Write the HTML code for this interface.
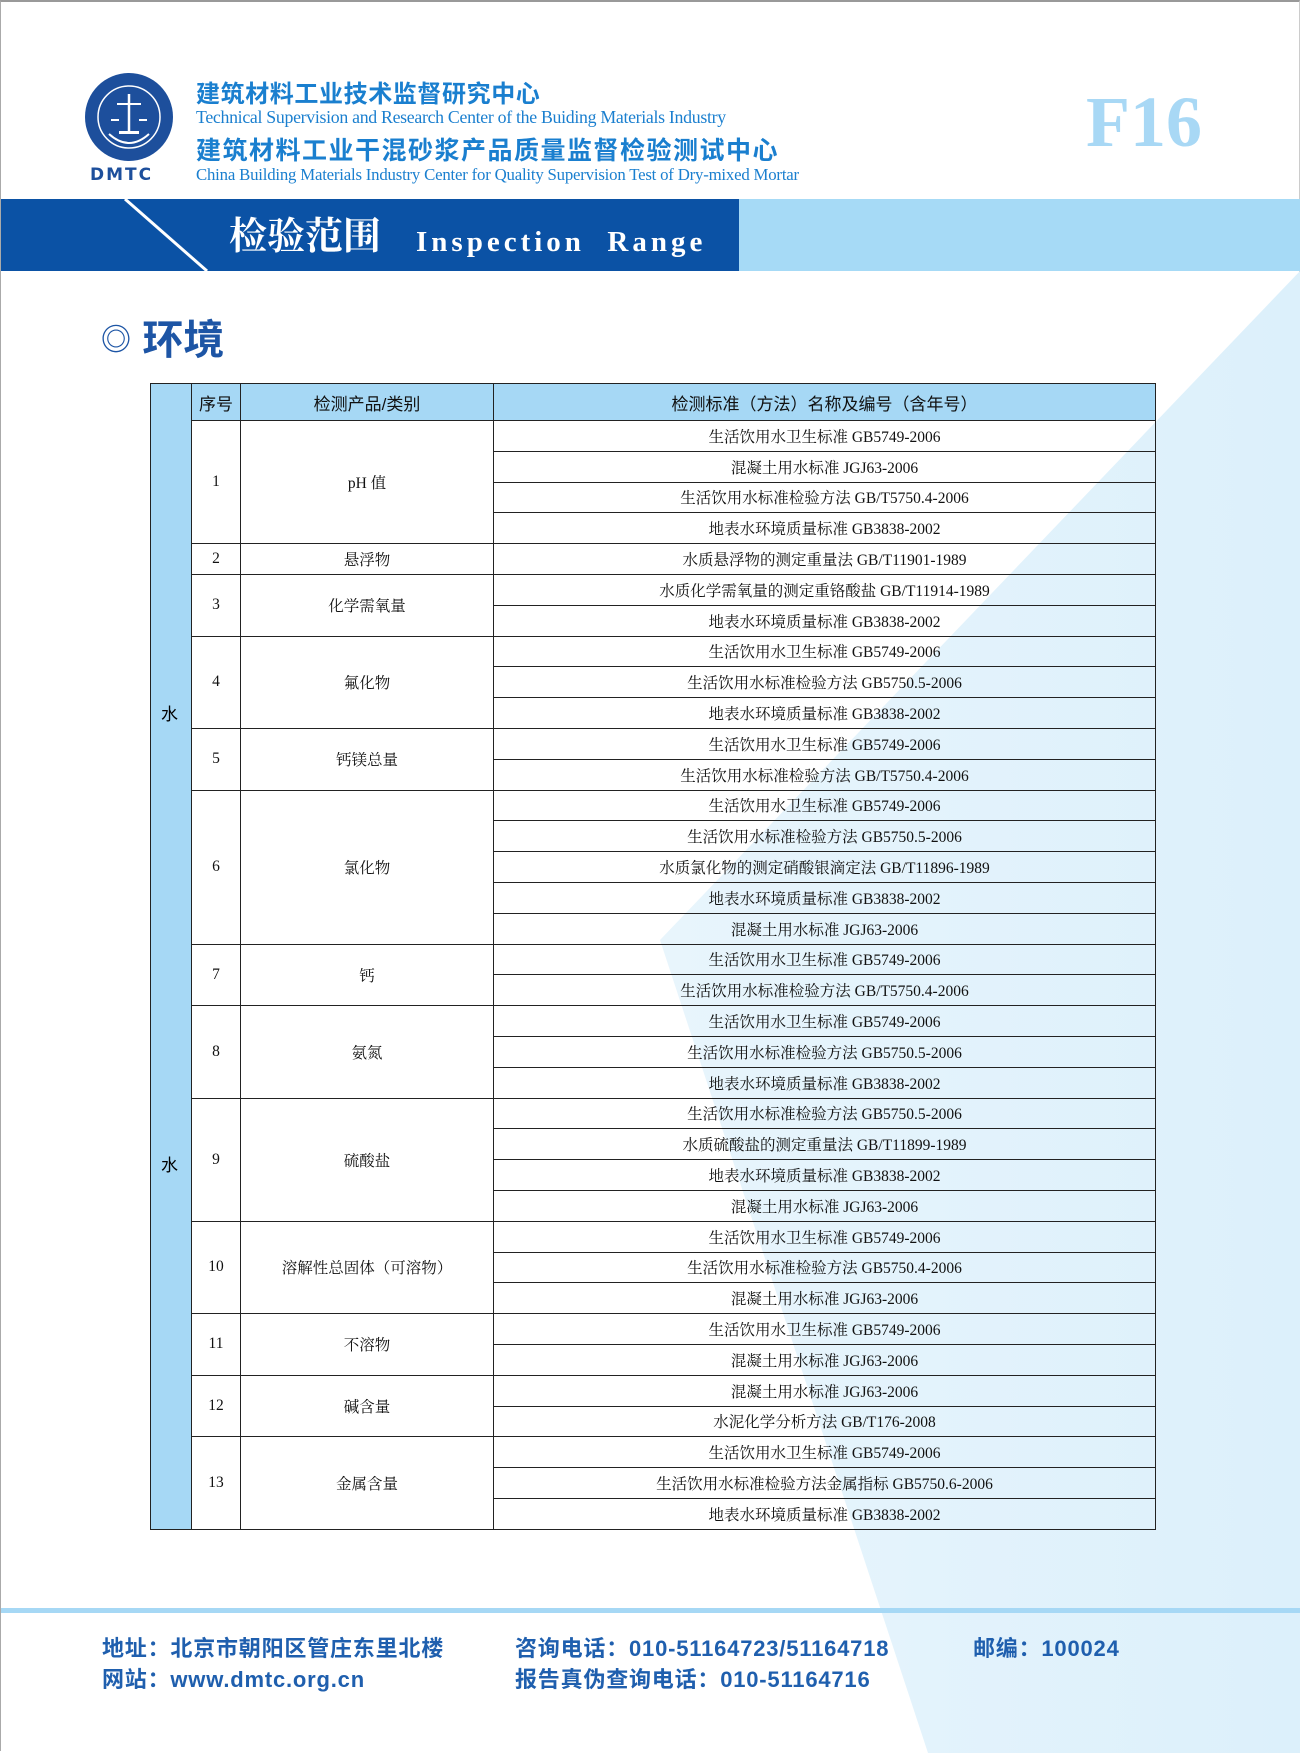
<!DOCTYPE html>
<html><head><meta charset="utf-8">
<style>
*{margin:0;padding:0;box-sizing:border-box}
body{width:1300px;height:1751px;position:relative;background:#fff;overflow:hidden;font-family:"Liberation Sans","Noto Sans CJK SC",sans-serif;border-top:2px solid #999;border-left:1px solid #aaa;border-right:1px solid #ccc}
.abs{position:absolute;line-height:1;white-space:nowrap}
.cn{font-family:"Liberation Sans","Noto Sans CJK SC",sans-serif}
table{position:absolute;left:149px;top:381px;width:1006px;border-collapse:collapse;font-family:"Liberation Serif","Noto Serif CJK SC",serif;font-size:15.5px;color:#111}
td{border:1.5px solid #222;text-align:center;height:30.8px;padding:0;background:transparent}
tr.h td{background:#a6d8f5;height:37px;font-family:"Liberation Sans","Noto Sans CJK SC",sans-serif;font-size:17px}
td.w{background:#a6d8f5;width:41px}
.foot{position:absolute;font-weight:bold;color:#1f5fae;font-size:22px;letter-spacing:0.8px;line-height:1;white-space:nowrap;font-family:"Liberation Sans","Noto Sans CJK SC",sans-serif}
</style></head><body>
<svg class="abs" style="left:0;top:0" width="1300" height="1751">
<defs><linearGradient id="g" x1="0" y1="0" x2="1" y2="0"><stop offset="0" stop-color="#e8f5fc"/><stop offset="1" stop-color="#dcf0fb"/></linearGradient></defs>
<polygon points="1300,268 659,938 927,1751 1300,1751" fill="url(#g)"/>
<rect x="0" y="197" width="738" height="72" fill="#0b52a5"/>
<rect x="738" y="197" width="562" height="72" fill="#a6daf6"/>
<line x1="124" y1="197" x2="206" y2="269" stroke="#fff" stroke-width="3"/>
<rect x="0" y="1606" width="1300" height="5" fill="#a6d8f5"/>
<circle cx="128" cy="115" r="44" fill="#1d4f9c"/>
<circle cx="128" cy="115" r="31" fill="none" stroke="#fff" stroke-width="1.5"/>
<line x1="128" y1="92" x2="128" y2="130" stroke="#fff" stroke-width="2.5"/>
<line x1="116" y1="102" x2="140" y2="102" stroke="#fff" stroke-width="2"/>
<line x1="110" y1="118" x2="118" y2="118" stroke="#fff" stroke-width="2"/>
<line x1="138" y1="118" x2="146" y2="118" stroke="#fff" stroke-width="2"/>
<rect x="118" y="129" width="20" height="3" fill="#fff"/>
<path d="M108 132 Q128 150 148 132" fill="none" stroke="#fff" stroke-width="2"/>
</svg>
<div class="abs" style="left:89px;top:165px;font-weight:bold;color:#1d4f9c;font-size:17px;letter-spacing:2px;font-family:'DejaVu Sans',sans-serif">DMTC</div>
<div class="abs cn" style="left:195px;top:81px;font-size:24px;font-weight:bold;color:#1a7fcf;letter-spacing:0.6px">建筑材料工业技术监督研究中心</div>
<div class="abs" style="left:195px;top:107px;font-size:17.8px;color:#1a7fcf;font-family:'Liberation Serif',serif;letter-spacing:-0.3px">Technical Supervision and Research Center of the Buiding Materials Industry</div>
<div class="abs cn" style="left:195px;top:137px;font-size:25px;font-weight:bold;color:#1a7fcf;letter-spacing:1.5px">建筑材料工业干混砂浆产品质量监督检验测试中心</div>
<div class="abs" style="left:195px;top:165px;font-size:16.8px;color:#1a7fcf;font-family:'Liberation Serif',serif;letter-spacing:-0.2px">China Building Materials Industry Center for Quality Supervision Test of Dry-mixed Mortar</div>
<div class="abs" style="left:1085px;top:84px;font-size:72px;font-weight:bold;color:#a8d8f5;font-family:'Liberation Serif',serif">F16</div>
<div class="abs" style="left:228px;top:216px;font-size:38px;font-weight:bold;color:#fff;font-family:'Liberation Serif','Noto Serif CJK SC',serif">检验范围</div>
<div class="abs" style="left:415px;top:226px;font-size:29px;font-weight:bold;color:#fff;font-family:'Liberation Serif',serif;letter-spacing:4px">Inspection&nbsp; Range</div>
<div class="abs" style="left:100px;top:318px;font-size:41px;font-weight:bold;color:#1d55a5"><span style="font-size:30px;position:relative;top:-4px">◎</span> 环境</div>
<table>
<tr class="h"><td class="w" rowspan="37"></td><td style="width:49px">序号</td><td style="width:253px">检测产品/类别</td><td>检测标准（方法）名称及编号（含年号）</td></tr>
<tr><td rowspan="4">1</td><td rowspan="4">pH 值</td><td>生活饮用水卫生标准 GB5749-2006</td></tr>
<tr><td>混凝土用水标准 JGJ63-2006</td></tr>
<tr><td>生活饮用水标准检验方法 GB/T5750.4-2006</td></tr>
<tr><td>地表水环境质量标准 GB3838-2002</td></tr>
<tr><td>2</td><td>悬浮物</td><td>水质悬浮物的测定重量法 GB/T11901-1989</td></tr>
<tr><td rowspan="2">3</td><td rowspan="2">化学需氧量</td><td>水质化学需氧量的测定重铬酸盐 GB/T11914-1989</td></tr>
<tr><td>地表水环境质量标准 GB3838-2002</td></tr>
<tr><td rowspan="3">4</td><td rowspan="3">氟化物</td><td>生活饮用水卫生标准 GB5749-2006</td></tr>
<tr><td>生活饮用水标准检验方法 GB5750.5-2006</td></tr>
<tr><td>地表水环境质量标准 GB3838-2002</td></tr>
<tr><td rowspan="2">5</td><td rowspan="2">钙镁总量</td><td>生活饮用水卫生标准 GB5749-2006</td></tr>
<tr><td>生活饮用水标准检验方法 GB/T5750.4-2006</td></tr>
<tr><td rowspan="5">6</td><td rowspan="5">氯化物</td><td>生活饮用水卫生标准 GB5749-2006</td></tr>
<tr><td>生活饮用水标准检验方法 GB5750.5-2006</td></tr>
<tr><td>水质氯化物的测定硝酸银滴定法 GB/T11896-1989</td></tr>
<tr><td>地表水环境质量标准 GB3838-2002</td></tr>
<tr><td>混凝土用水标准 JGJ63-2006</td></tr>
<tr><td rowspan="2">7</td><td rowspan="2">钙</td><td>生活饮用水卫生标准 GB5749-2006</td></tr>
<tr><td>生活饮用水标准检验方法 GB/T5750.4-2006</td></tr>
<tr><td rowspan="3">8</td><td rowspan="3">氨氮</td><td>生活饮用水卫生标准 GB5749-2006</td></tr>
<tr><td>生活饮用水标准检验方法 GB5750.5-2006</td></tr>
<tr><td>地表水环境质量标准 GB3838-2002</td></tr>
<tr><td rowspan="4">9</td><td rowspan="4">硫酸盐</td><td>生活饮用水标准检验方法 GB5750.5-2006</td></tr>
<tr><td>水质硫酸盐的测定重量法 GB/T11899-1989</td></tr>
<tr><td>地表水环境质量标准 GB3838-2002</td></tr>
<tr><td>混凝土用水标准 JGJ63-2006</td></tr>
<tr><td rowspan="3">10</td><td rowspan="3">溶解性总固体（可溶物）</td><td>生活饮用水卫生标准 GB5749-2006</td></tr>
<tr><td>生活饮用水标准检验方法 GB5750.4-2006</td></tr>
<tr><td>混凝土用水标准 JGJ63-2006</td></tr>
<tr><td rowspan="2">11</td><td rowspan="2">不溶物</td><td>生活饮用水卫生标准 GB5749-2006</td></tr>
<tr><td>混凝土用水标准 JGJ63-2006</td></tr>
<tr><td rowspan="2">12</td><td rowspan="2">碱含量</td><td>混凝土用水标准 JGJ63-2006</td></tr>
<tr><td>水泥化学分析方法 GB/T176-2008</td></tr>
<tr><td rowspan="3">13</td><td rowspan="3">金属含量</td><td>生活饮用水卫生标准 GB5749-2006</td></tr>
<tr><td>生活饮用水标准检验方法金属指标 GB5750.6-2006</td></tr>
<tr><td>地表水环境质量标准 GB3838-2002</td></tr>
</table>
<div class="abs cn" style="left:160px;top:704px;font-size:17px">水</div>
<div class="abs cn" style="left:160px;top:1155px;font-size:17px">水</div>
<div class="foot" style="left:101px;top:1636px">地址：北京市朝阳区管庄东里北楼</div>
<div class="foot" style="left:514px;top:1636px">咨询电话：010-51164723/51164718</div>
<div class="foot" style="left:972px;top:1636px">邮编：100024</div>
<div class="foot" style="left:101px;top:1667px">网站：www.dmtc.org.cn</div>
<div class="foot" style="left:514px;top:1667px">报告真伪查询电话：010-51164716</div>
</body></html>
